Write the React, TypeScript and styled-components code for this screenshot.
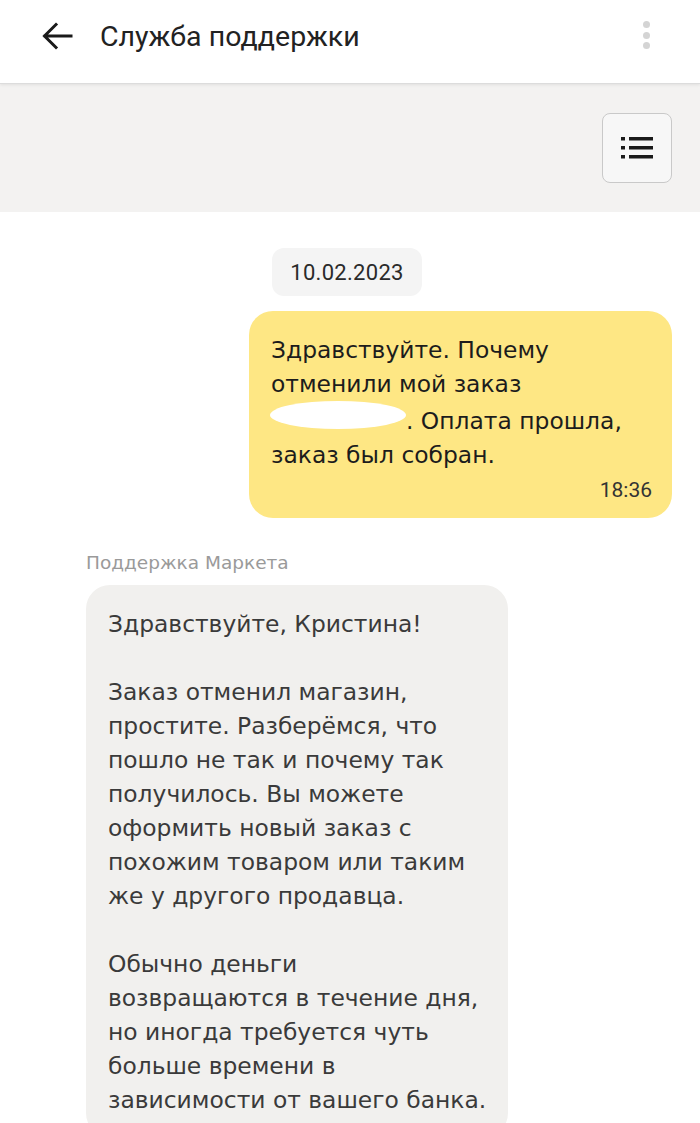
import React from "react";
import styled, { createGlobalStyle } from "styled-components";

const Global = createGlobalStyle`
  html, body { margin: 0; padding: 0; background: #fff; }
  body { width: 700px; height: 1123px; overflow: hidden; }
  #root { width: 700px; height: 1123px; overflow: hidden; }
`;

const Page = styled.div`
  width: 700px;
  height: 1123px;
  overflow: hidden;
  display: flex;
  flex-direction: column;
  background: #fff;
`;

const Header = styled.header`
  height: 84px;
  flex: none;
  display: flex;
  align-items: center;
  padding: 0 50px 0 40px;
  box-sizing: border-box;
  background: #fff;
  border-bottom: 1px solid #dcdcdc;
  box-shadow: 0 1px 3px rgba(0, 0, 0, 0.08);
  position: relative;
  z-index: 1;
`;

const BackButton = styled.div`
  width: 34px;
  height: 34px;
  display: flex;
  align-items: center;
  justify-content: center;
  margin-right: 26px;
  margin-top: -12px;
`;

const Title = styled.h1`
  margin: -10px 0 0;
  flex: 1;
  font-family: Roboto, "Liberation Sans", sans-serif;
  font-weight: 400;
  font-size: 28.5px;
  color: #222;
`;

const Kebab = styled.div`
  display: flex;
  flex-direction: column;
  gap: 3.5px;
  margin-top: -13px;
`;

const Dot = styled.span`
  width: 7px;
  height: 7px;
  border-radius: 50%;
  background: #d4d4d4;
`;

const Toolbar = styled.div`
  height: 128px;
  flex: none;
  background: #f3f2f1;
  display: flex;
  align-items: center;
  justify-content: flex-end;
  padding-right: 28px;
  box-sizing: border-box;
`;

const ListButton = styled.div`
  width: 70px;
  height: 70px;
  box-sizing: border-box;
  border: 1px solid #c9c9c9;
  border-radius: 8px;
  background: #f7f7f7;
  display: flex;
  align-items: center;
  justify-content: center;
`;

const Chat = styled.div`
  display: flex;
  flex-direction: column;
  padding: 36px 28px 0 86px;
`;

const DateRow = styled.div`
  display: flex;
  justify-content: center;
  margin-left: -64px;
`;

const DatePill = styled.div`
  background: #f4f4f4;
  border-radius: 12px;
  padding: 0 18px;
  height: 48px;
  display: flex;
  align-items: center;
  font-family: Roboto, "Liberation Sans", sans-serif;
  font-size: 22px;
  letter-spacing: 0.3px;
  color: #2a2a2a;
`;

const Bubble = styled.div<{ $mine?: boolean }>`
  box-sizing: border-box;
  width: ${(p) => (p.$mine ? "423px" : "422px")};
  align-self: ${(p) => (p.$mine ? "flex-end" : "flex-start")};
  background: ${(p) => (p.$mine ? "#fee784" : "#f1f0ee")};
  border-radius: 24px;
  padding: ${(p) => (p.$mine ? "22px 16px 16px 22px" : "22px 16px 20px 22px")};
  margin-top: ${(p) => (p.$mine ? "15px" : "12px")};
  font-family: "DejaVu Sans", "Open Sans", sans-serif;
  font-size: 23.4px;
  line-height: 34px;
  color: ${(p) => (p.$mine ? "#1c1c1c" : "#3a3a3a")};
`;

const Paragraph = styled.p`
  margin: 0;
  & + & { margin-top: 34px; }
`;

const Line = styled.span`
  display: block;
  white-space: nowrap;
`;

const Redact = styled.span`
  display: inline-block;
  width: 136px;
  height: 28px;
  background: #fff;
  border-radius: 50%;
  vertical-align: 0px;
  margin-left: -1px;
`;

const Time = styled.div`
  text-align: right;
  font-family: Roboto, "Liberation Sans", sans-serif;
  font-size: 21px;
  line-height: 24px;
  color: #333;
  margin-top: 6px;
  margin-right: 4px;
`;

const Sender = styled.div`
  margin-top: 34px;
  font-family: "DejaVu Sans", "Open Sans", sans-serif;
  font-size: 18.5px;
  color: #9a9a9a;
`;

export default function App() {
  return (
    <Page>
      <Global />
      <Header>
        <BackButton>
          <svg width="32" height="28" viewBox="0 0 32 28" fill="none">
            <path d="M30 14H4M15 2.5L3.5 14 15 25.5" stroke="#1a1a1a" strokeWidth="3" strokeLinecap="square" />
          </svg>
        </BackButton>
        <Title>Служба поддержки</Title>
        <Kebab>
          <Dot />
          <Dot />
          <Dot />
        </Kebab>
      </Header>
      <Toolbar>
        <ListButton>
          <svg width="34" height="24" viewBox="0 0 34 24">
            <rect x="1" y="1" width="4" height="3.5" fill="#1a1a1a" />
            <rect x="9" y="1" width="24" height="3.5" fill="#1a1a1a" />
            <rect x="1" y="10" width="4" height="3.5" fill="#1a1a1a" />
            <rect x="9" y="10" width="24" height="3.5" fill="#1a1a1a" />
            <rect x="1" y="19" width="4" height="3.5" fill="#1a1a1a" />
            <rect x="9" y="19" width="24" height="3.5" fill="#1a1a1a" />
          </svg>
        </ListButton>
      </Toolbar>
      <Chat>
        <DateRow>
          <DatePill>10.02.2023</DatePill>
        </DateRow>
        <Bubble $mine>
          <Paragraph>
            <Line>Здравствуйте. Почему</Line>
            <Line>отменили мой заказ</Line>
            <Line>
              <Redact />. Оплата прошла,
            </Line>
            <Line>заказ был собран.</Line>
          </Paragraph>
          <Time>18:36</Time>
        </Bubble>
        <Sender>Поддержка Маркета</Sender>
        <Bubble>
          <Paragraph>
            <Line>Здравствуйте, Кристина!</Line>
          </Paragraph>
          <Paragraph>
            <Line>Заказ отменил магазин,</Line>
            <Line>простите. Разберёмся, что</Line>
            <Line>пошло не так и почему так</Line>
            <Line>получилось. Вы можете</Line>
            <Line>оформить новый заказ с</Line>
            <Line>похожим товаром или таким</Line>
            <Line>же у другого продавца.</Line>
          </Paragraph>
          <Paragraph>
            <Line>Обычно деньги</Line>
            <Line>возвращаются в течение дня,</Line>
            <Line>но иногда требуется чуть</Line>
            <Line>больше времени в</Line>
            <Line>зависимости от вашего банка.</Line>
          </Paragraph>
        </Bubble>
      </Chat>
    </Page>
  );
}
